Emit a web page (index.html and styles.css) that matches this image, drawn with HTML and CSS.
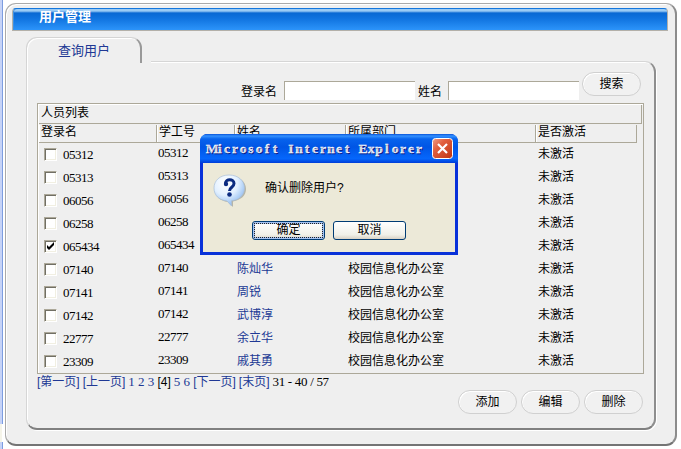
FILE: index.html
```html
<!DOCTYPE html>
<html lang="zh-CN">
<head>
<meta charset="utf-8">
<title>用户管理</title>
<link rel="stylesheet" href="styles.css">
</head>
<body>
<div class="splitter"><span class="split-top"></span><span class="split-main"></span><span class="split-gap"></span><span class="split-end"></span></div>
<main class="window">
  <header class="titlebar">用户管理</header>
  <nav class="tabs"><div class="tab">查询用户</div><div class="tab-gap"></div></nav>
  <section class="panel">
    <form class="search">
      <label for="login">登录名</label><input id="login" class="login-input" type="text">
      <label for="name" class="name-label">姓名</label><input id="name" class="name-input" type="text">
      <button type="button" class="pill">搜索</button>
    </form>
    <div class="list">
      <div class="caption">人员列表</div>
      <div class="row head"><span>登录名</span><span>学工号</span><span>姓名</span><span>所属部门</span><span>是否激活</span></div>
      <div id="rows"></div>
    </div>
    <div class="pager"><a>[第一页]</a><a>[上一页]</a><a class="page">1</a><a class="page">2</a><a class="page">3</a><b>[4]</b><a class="page">5</a><a class="page">6</a><a>[下一页]</a><a>[末页]</a><b class="range">31 - 40 / 57</b></div>
    <div class="actions"><button type="button" class="pill">添加</button><button type="button" class="pill">编辑</button><button type="button" class="pill">删除</button></div>
  </section>
</main>
<div class="dialog" role="dialog">
  <div class="dialog-title"><svg class="dialog-name" width="218" height="20"><text y="14" text-anchor="middle" x="5 13 20 28 36 44 52 60 68 76 84 92 100 108 116 124 132 140 148 156 164 172 180 188 196 204 212">Microsoft Internet Explorer</text></svg>
    <svg class="close" width="21" height="21" viewBox="0 0 21 21"><defs><linearGradient id="red" x2="1" y2="1"><stop stop-color="#f0a08a"/><stop offset=".35" stop-color="#e2603f"/><stop offset="1" stop-color="#bd3411"/></linearGradient></defs><rect x=".5" y=".5" width="20" height="20" rx="3" fill="url(#red)" stroke="#fff"/><path d="M6 6l9 9M15 6l-9 9" stroke="#fff" stroke-width="2.2"/></svg>
  </div>
  <div class="dialog-body">
    <div class="message">
      <svg class="question" width="34" height="34" viewBox="0 0 34 34"><defs><radialGradient id="bubble" cx=".38" cy=".25" r=".8"><stop stop-color="#fff"/><stop offset=".5" stop-color="#e2f0ff"/><stop offset="1" stop-color="#83b3ee"/></radialGradient></defs><path d="M17 2C8 2 2 7.500 2 15s5 12 13 13l5 5v-5.500c8-1.500 13-6 13-12.500C33 7.500 26 2 17 2z" fill="#98998e" opacity=".65"/><path d="M16 1C7 1 1 6.500 1 14s5 12 13 13l4.500 5v-5.200C27 26 31.500 20.500 31.500 14 31.500 6.500 25 1 16 1z" fill="url(#bubble)" stroke="#a9bfd9" stroke-width=".7"/><path d="M12.500 9.500c0-5 8.500-5 8.500 0 0 4-4.500 3.500-4.500 7.500" fill="none" stroke="#0b2b80" stroke-width="3"/><circle cx="13" cy="10" r="2.200" fill="#0b2b80"/><circle cx="16.500" cy="20.500" r="2.300" fill="#0b2b80"/></svg>
      <span>确认删除用户?</span>
    </div>
    <div class="dialog-actions"><button type="button" class="ok">确定</button><button type="button">取消</button></div>
  </div>
</div>
<script src="rows.js"></script>
</body>
</html>
```
FILE: styles.css
```css
* { box-sizing: border-box; }
body { margin: 0; width: 681px; height: 449px; overflow: hidden; display: flex; background: #fff; color: #000; font: 12px/16px "Liberation Sans", "Noto Sans CJK SC", sans-serif; }
button, input { font: inherit; margin: 0; }
.splitter { width: 5px; height: 449px; display: flex; flex-direction: column; }
.splitter span { width: 3px; border-right: 1px solid #7d9de0; background: #c6d3f7; }
.split-top { height: 14px; }
.split-main { height: 410px; }
.splitter .split-gap { height: 18px; background: #f5f4e9; border-color: #fff; }
.split-end { flex: 1; }
.window { width: 672px; height: 443px; margin-top: 3px; padding: 4px 6px; border: 1px solid #aaa; border-right: 2px solid #8c8c8c; border-bottom: 2px solid #747474; border-radius: 11px; background: #efefef; box-shadow: inset 1px 1px #fff; }
.titlebar { height: 23px; width: 656px; padding-left: 26px; border: 1px solid #b3b0a9; border-top-color: #1476dc; border-radius: 4px 4px 0 0; background: linear-gradient(#9acbf5 0 2px, #0968d3 4px, #1073df 45%, #2c94fa); color: #fff; font-size: 13px; font-weight: bold; line-height: 16px; box-shadow: inset 1px 0 #3d90e2; }
.tabs { position: relative; z-index: 1; display: flex; align-items: flex-end; margin: 6px 0 0 14px; height: 26px; width: 630px; }
.tab { width: 116px; height: 26px; padding-left: 31px; border: 1px solid #d4d4d4; border-right: 2px solid #999; border-bottom: 0; border-radius: 11px 11px 0 0; background: #efefef; box-shadow: inset 1px 1px #fff; color: #203894; font-size: 13px; line-height: 26px; }
.tab-gap { width: 9px; height: 2px; background: #efefef; }
.panel { margin: -2px 0 0 14px; width: 630px; height: 369px; padding: 9px 11px 0 10px; border: 1px solid #d6d6d6; border-right: 2px solid #8e8e8e; border-bottom: 2px solid #808080; border-radius: 0 11px 11px 11px; box-shadow: inset 1px 1px #fff, 1px 1px #fff; }
.search { display: flex; height: 32px; align-items: flex-start; padding-left: 204px; }
.search label { width: 43px; padding-top: 13px; }
.search .name-label { width: 30px; }
.search label + input { height: 19px; margin-top: 10px; padding: 0; border: 0; border-top: 1px solid #aca899; border-left: 1px solid #aca899; background: #fff; }
.search .login-input { width: 131px; margin-right: 3px; }
.search .name-input { width: 131px; margin-right: 3px; }
.search .pill { margin-top: 1px; }
.pill { width: 59px; height: 24px; padding: 0; border: 1px solid #d0d0d0; border-radius: 12px; background: #f1f1f1; box-shadow: inset 1px 1px #fff; color: #000; }
.list { width: 607px; height: 271px; border: 1px solid #aca899; padding: 1px; box-shadow: inset 1px 1px #fff; }
.caption { width: 603px; height: 19px; padding-left: 2px; border: 1px solid #aca899; border-width: 0 1px 1px 0; line-height: 17px; }
.row { display: grid; grid-template-columns: 118px 78px 111px 190px 101px; }
.row > span { padding-left: 2px; white-space: nowrap; }
.head { height: 19px; padding-top: 1px; }
.head > span { border: 1px solid #aca899; border-width: 0 1px 1px 0; box-shadow: inset 1px 0 #fff; line-height: 15px; }
.user { height: 23px; line-height: 23px; }
.user .number { font: 13px/19px "Liberation Serif", serif; letter-spacing: -.5px; padding-left: 1px; }
.user .check { display: flex; align-items: center; gap: 6px; padding: 0 0 0 5px; line-height: 23px; }
.box { width: 13px; height: 13px; border: 1px solid; border-color: #aca899 #fff #fff #aca899; background: #fff; box-shadow: inset 1px 1px #716f64, inset -1px -1px #f1efe2; flex: none; }
.box svg { display: block; }
.user .person { color: #203894; }
.pager { display: flex; gap: 3px; height: 16px; white-space: nowrap; line-height: 16px; }
.pager a { color: #203894; }
.pager b { font-weight: normal; }
.pager .page { width: 6.7px; font-family: "Liberation Serif", serif; font-size: 13px; }
.pager .range { font-family: "Liberation Serif", serif; font-size: 13px; letter-spacing: -.3px; }
.actions { display: flex; justify-content: flex-end; gap: 4px; padding-right: 0; }
.dialog { position: absolute; z-index: 2; left: 200px; top: 134px; width: 258px; height: 121px; border: 3px solid #0831d9; border-top: 0; border-radius: 8px 8px 0 0; background: #0831d9; }
.dialog-title { display: flex; align-items: center; justify-content: space-between; height: 29px; margin: 0 -3px; padding: 0 5px 0 7px; border-radius: 7px 7px 0 0; background: linear-gradient(#0753d8, #3491ff 2px, #0763ed 5px, #0055e5 45%, #0567fc 85%, #003dd7); }
.dialog-name { overflow: visible; fill: #fff; stroke: #fff; stroke-width: .3px; font: bold 13.5px "Liberation Serif", serif; text-shadow: 1px 1px #0a1883; }
.dialog-body { height: 89px; background: #ece9d8; }
.message { display: flex; align-items: center; height: 58px; padding: 0 0 8px 10px; gap: 18px; }
.question { margin-top: 6px; }
.dialog-actions { display: flex; gap: 8px; margin-left: 49px; }
.dialog-actions button { height: 19px; width: 73px; padding: 0; border: 1px solid #003c74; border-radius: 3px; background: linear-gradient(#fff, #f0f0e8 75%, #d9d2c5); line-height: 17px; }
.dialog-actions .ok { box-shadow: inset 0 0 0 2px #a4c2f1; outline: 1px dotted #222; outline-offset: -3px; }
```
FILE: rows.js
```js
const users = [
  ["05312", ""], ["05313", ""], ["06056", ""], ["06258", ""], ["065434", ""],
  ["07140", "陈灿华"], ["07141", "周锐"], ["07142", "武博淳"], ["22777", "余立华"], ["23309", "戚其勇"]
];
const tick = '<svg width="11" height="11" viewBox="0 0 11 11"><path d="M2 4v3l2 2 5-5V1L4 6z"/></svg>';
document.getElementById("rows").innerHTML = users.map(([id, name]) => `
  <div class="row user">
    <span class="check number"><i class="box">${id === "065434" ? tick : ""}</i>${id}</span>
    <span class="number">${id}</span>
    <span class="person">${name}</span>
    <span>${name ? "校园信息化办公室" : ""}</span>
    <span>未激活</span>
  </div>`).join("");
```
